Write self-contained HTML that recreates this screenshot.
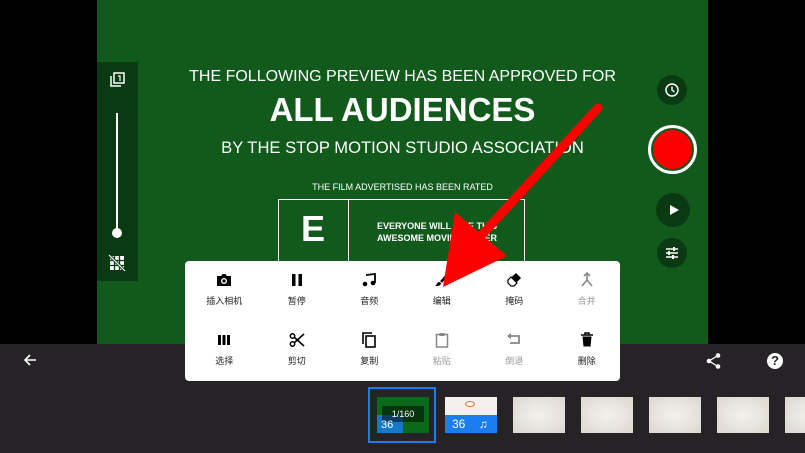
<!DOCTYPE html>
<html><head><meta charset="utf-8"><style>
*{margin:0;padding:0;box-sizing:border-box}
body{width:805px;height:453px;background:#000;position:relative;overflow:hidden;font-family:"Liberation Sans","Noto Sans CJK SC",sans-serif}
.abs{position:absolute}
.green{left:97px;top:0;width:611px;height:344px;background:#115a1c}
.t{color:#fff;text-align:center;width:611px;left:97px}
.bar{left:0;top:344px;width:805px;height:109px;background:#262326}
.pop{left:185px;top:261px;width:435px;height:120px;background:#fff;border-radius:4px}
.cell{position:absolute;width:72.5px;text-align:center;font-size:9px;color:#222}
.cell svg{display:block;margin:0 auto 6px}
.g{color:#999}
.btn{border-radius:50%;background:#0a3a12}
.thumb{position:absolute;top:397px;width:52px;height:36px;background:radial-gradient(#f4f2ee,#dcd7cf)}
</style></head><body>
<div class="abs green"></div>
<div class="abs t" style="top:68px;font-size:16px">THE FOLLOWING PREVIEW HAS BEEN APPROVED FOR</div>
<div class="abs t" style="top:91px;font-size:33px;font-weight:bold">ALL AUDIENCES</div>
<div class="abs t" style="top:138px;font-size:16.6px">BY THE STOP MOTION STUDIO ASSOCIATION</div>
<div class="abs t" style="top:182px;font-size:9px">THE FILM ADVERTISED HAS BEEN RATED</div>
<div class="abs" style="left:278px;top:199px;width:247px;height:70px;border:1px solid #fff;border-bottom:none"></div>
<div class="abs" style="left:348px;top:199px;width:1px;height:62px;background:#fff"></div>
<div class="abs" style="left:278px;top:208px;width:70px;text-align:center;color:#fff;font-size:36px;font-weight:bold">E</div>
<div class="abs" style="left:349px;top:220px;width:176px;text-align:center;color:#fff;font-size:9px;font-weight:bold;line-height:12px">EVERYONE WILL LIKE THIS<br>AWESOME MOVIE TRAILER</div>
<!-- left panel -->
<div class="abs" style="left:97px;top:62px;width:41px;height:219px;background:#0a3a12"></div>
<svg class="abs" style="left:108px;top:70px" width="20" height="20"><rect x="6" y="3" width="10" height="10" fill="none" stroke="#fff" stroke-width="1.5"/><path d="M3 6v10h10" fill="none" stroke="#fff" stroke-width="1.5"/><path d="M10 6h2v5" fill="none" stroke="#fff" stroke-width="1.2"/></svg>
<div class="abs" style="left:116px;top:113px;width:2px;height:120px;background:#fff"></div>
<div class="abs" style="left:112px;top:228px;width:10px;height:10px;border-radius:50%;background:#fff"></div>
<svg class="abs" style="left:108px;top:254px" width="18" height="18"><g fill="#fff"><rect x="2" y="2" width="14" height="14"/></g><g stroke="#0a3a12" stroke-width="1.3"><path d="M6.5 2v14M11.5 2v14M2 6.5h14M2 11.5h14"/></g><path d="M1 1l16 16" stroke="#0a3a12" stroke-width="3"/><path d="M1 1l16 16" stroke="#fff" stroke-width="1.2"/></svg>
<!-- right controls -->
<div class="abs btn" style="left:657px;top:75px;width:30px;height:30px"></div>
<svg class="abs" style="left:664px;top:82px" width="16" height="16"><circle cx="8" cy="8" r="6" fill="none" stroke="#fff" stroke-width="1.5"/><path d="M8 4.5V8l2.5 2" fill="none" stroke="#fff" stroke-width="1.4"/></svg>
<div class="abs" style="left:648px;top:125px;width:49px;height:49px;border-radius:50%;border:3px solid #fff;background:#115a1c"></div>
<div class="abs" style="left:653px;top:130px;width:39px;height:39px;border-radius:50%;background:#f00"></div>
<div class="abs btn" style="left:656px;top:193px;width:34px;height:34px"></div>
<svg class="abs" style="left:667px;top:203px" width="14" height="14"><path d="M3 2l9 5-9 5z" fill="#fff"/></svg>
<div class="abs btn" style="left:657px;top:238px;width:30px;height:30px"></div>
<svg class="abs" style="left:664px;top:245px" width="16" height="16"><g stroke="#fff" stroke-width="1.5"><path d="M2 4h12M2 8h12M2 12h12"/></g><g stroke="#fff" stroke-width="2"><path d="M10 2v4M5 6v4M9 10v4"/></g></svg>
<!-- bottom bar -->
<div class="abs bar"></div>
<svg class="abs" style="left:22px;top:352px" width="16" height="16"><path d="M14 8H3M8 3L3 8l5 5" fill="none" stroke="#fff" stroke-width="1.6"/></svg>
<svg class="abs" style="left:705px;top:352px" width="18" height="18"><circle cx="13" cy="3.5" r="2.3" fill="#fff"/><circle cx="4" cy="9" r="2.3" fill="#fff"/><circle cx="13" cy="14.5" r="2.3" fill="#fff"/><path d="M13 3.5L4 9l9 5.5" fill="none" stroke="#fff" stroke-width="1.3"/></svg>
<div class="abs" style="left:767px;top:353px;width:16px;height:16px;border-radius:50%;background:#fff;color:#262326;font-size:13px;font-weight:bold;text-align:center;line-height:16px">?</div>
<!-- thumbnails -->
<div class="abs" style="left:368px;top:387px;width:68px;height:56px;border:2px solid #1a7df0"></div>
<div class="abs" style="left:377px;top:397px;width:52px;height:36px;background:#0b6a1a"></div>
<div class="abs" style="left:377px;top:415px;width:26px;height:18px;background:#1a7df0;opacity:.8"></div>
<div class="abs" style="left:382px;top:406px;width:42px;height:16px;background:rgba(0,0,0,.5);color:#fff;font-size:9px;text-align:center;line-height:16px">1/160</div>
<div class="abs" style="left:381px;top:419px;color:#fff;font-size:11px">36</div>
<div class="abs" style="left:445px;top:397px;width:52px;height:18px;background:#f4f1ec"></div>
<div class="abs" style="left:465px;top:401px;width:10px;height:6px;border:1.5px solid #e07030;border-radius:50%"></div>
<div class="abs" style="left:445px;top:415px;width:52px;height:18px;background:#1a7df0;color:#fff;font-size:12px;line-height:18px;padding-left:7px">36 <span style="margin-left:10px">♫</span></div>
<div class="thumb" style="left:513px"></div>
<div class="thumb" style="left:581px"></div>
<div class="thumb" style="left:649px"></div>
<div class="thumb" style="left:717px"></div>
<div class="thumb" style="left:785px"></div>
<!-- popup -->
<div class="abs pop">
<div class="cell" style="left:3px;top:11px"><svg width="16" height="16"><path d="M1 4h4l1.5-2h3L11 4h4v10H1z" fill="#000"/><circle cx="8" cy="9" r="3" fill="#fff"/><circle cx="8" cy="9" r="1.6" fill="#000"/></svg>插入相机</div>
<div class="cell" style="left:75.5px;top:11px"><svg width="16" height="16"><rect x="3" y="2" width="3.5" height="12" fill="#000"/><rect x="9.5" y="2" width="3.5" height="12" fill="#000"/></svg>暂停</div>
<div class="cell" style="left:148px;top:11px"><svg width="16" height="16"><path d="M5 3l9-1v9" fill="none" stroke="#000" stroke-width="1.8"/><circle cx="4" cy="12" r="2.3" fill="#000"/><circle cx="12" cy="11" r="2.3" fill="#000"/></svg>音频</div>
<div class="cell" style="left:220.5px;top:11px"><svg width="16" height="16"><path d="M14 2L7 10" stroke="#000" stroke-width="2.5"/><path d="M5 10c-2 0-2 3-4 4 3 0 6 0 6-3z" fill="#000"/></svg>编辑</div>
<div class="cell" style="left:293px;top:11px"><svg width="16" height="16"><path d="M10 1l5 5-7 7H5L1 9z" fill="#000"/><path d="M5 5l6 6-3 3H5L2 11 2 8z" fill="#fff" stroke="#000" stroke-width="1.2"/></svg>掩码</div>
<div class="cell g" style="left:365.5px;top:11px"><svg width="16" height="16"><path d="M8 1v7L3 14M8 8l5 6M5 4l3-3 3 3" fill="none" stroke="#888" stroke-width="1.6"/></svg>合并</div>
<div class="cell" style="left:3px;top:71px"><svg width="16" height="16"><rect x="2" y="3" width="3" height="10" fill="#000"/><rect x="6.5" y="3" width="3" height="10" fill="#000"/><rect x="11" y="3" width="3" height="10" fill="#000"/></svg>选择</div>
<div class="cell" style="left:75.5px;top:71px"><svg width="16" height="16"><circle cx="3.5" cy="4" r="2.2" fill="none" stroke="#000" stroke-width="1.5"/><circle cx="3.5" cy="12" r="2.2" fill="none" stroke="#000" stroke-width="1.5"/><path d="M5 5l10 9M5 11L15 2" stroke="#000" stroke-width="1.6"/></svg>剪切</div>
<div class="cell" style="left:148px;top:71px"><svg width="16" height="16"><path d="M2 12V1h9" fill="none" stroke="#000" stroke-width="1.6"/><rect x="5" y="4" width="9" height="11" fill="none" stroke="#000" stroke-width="1.6"/></svg>复制</div>
<div class="cell g" style="left:220.5px;top:71px"><svg width="16" height="16"><rect x="2.5" y="2.5" width="11" height="12.5" fill="none" stroke="#888" stroke-width="1.5"/><rect x="5.5" y="1" width="5" height="3" fill="#888"/></svg>粘贴</div>
<div class="cell g" style="left:293px;top:71px"><svg width="16" height="16"><path d="M4 4h9v7H4" fill="none" stroke="#888" stroke-width="1.8"/><path d="M1 4l4-3v6z" fill="#888"/></svg>倒退</div>
<div class="cell" style="left:365.5px;top:71px"><svg width="16" height="16"><path d="M2 3h12M6 3V1h4v2" stroke="#000" stroke-width="1.5" fill="none"/><path d="M3.5 4.5h9l-1 10h-7z" fill="#000"/></svg>删除</div>
</div>
<!-- arrow -->
<svg class="abs" style="left:0;top:0" width="805" height="453"><path d="M598 108L468 250" stroke="#f00" stroke-width="9" stroke-linecap="round"/><path d="M443 287L455 212L507 256z" fill="#f00"/></svg>
</body></html>
